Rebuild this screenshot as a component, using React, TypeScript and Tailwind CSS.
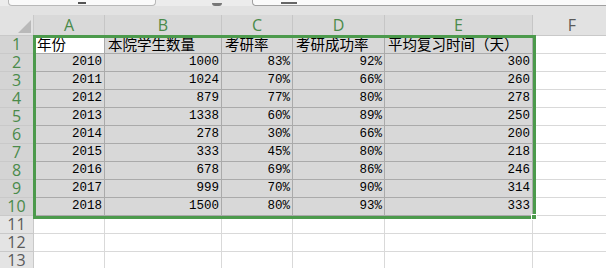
import React from 'react'

const cols = [
  { key: 'A', w: 'w-[71px]' },
  { key: 'B', w: 'w-[117px]' },
  { key: 'C', w: 'w-[71px]' },
  { key: 'D', w: 'w-[92px]' },
  { key: 'E', w: 'w-[148px]' },
]

const header = ['年份', '本院学生数量', '考研率', '考研成功率', '平均复习时间（天）']

const rows = [
  ['2010', '1000', '83%', '92%', '300'],
  ['2011', '1024', '70%', '66%', '260'],
  ['2012', '879', '77%', '80%', '278'],
  ['2013', '1338', '60%', '89%', '250'],
  ['2014', '278', '30%', '66%', '200'],
  ['2015', '333', '45%', '80%', '218'],
  ['2016', '678', '69%', '86%', '246'],
  ['2017', '999', '70%', '90%', '314'],
  ['2018', '1500', '80%', '93%', '333'],
]

const cjk = "font-['Noto_Sans_CJK_SC',sans-serif]"
const mono = "font-['Liberation_Mono',monospace]"
const label = "font-['Open_Sans','Liberation_Sans',sans-serif]"

function RowHead({ n, on }: { n: number; on: boolean }) {
  return (
    <div
      className={`flex w-[34px] shrink-0 items-center justify-center overflow-hidden border-b border-r border-[#c9c9c9] text-[16px] leading-[17px] ${label} ${
        on ? 'bg-[#d4d4d4] text-[#4a8a4a]' : 'bg-[#e4e4e4] text-[#5a5a5a]'
      }`}
    >
      {n}
    </div>
  )
}

export default function App() {
  return (
    <div className="relative h-[268px] w-[606px] overflow-hidden bg-white">
      {/* toolbar remnant */}
      <div className="flex h-[6px] items-end bg-[#ececec]">
        <div className="ml-[8px] flex h-[6px] w-[148px] items-end justify-center rounded-b-[4px] border border-t-0 border-[#b8b8b8] bg-[#fafafa]">
          <span className="mb-[1px] h-[2px] w-[8px] bg-[#555]" />
        </div>
        <div className="ml-[56px] h-[3px] w-[10px] rounded-b-full bg-[#777]" />
        <div className="ml-[30px] flex h-[6px] flex-1 items-end rounded-bl-[4px] border-b border-l border-[#a0a0a0] bg-[#fafafa] pl-[28px]">
          <span className="mb-[1px] h-[2px] w-[16px] bg-[#666]" />
        </div>
      </div>
      <div className="h-[9px] bg-[#e2e2e2]" />

      {/* column headers */}
      <div className="flex h-[21px] bg-[#e2e2e2]">
        <div className="relative w-[34px] shrink-0 border-b border-r border-[#c9c9c9]">
          <div className="absolute bottom-[2px] right-[2px] h-0 w-0 border-b-[13px] border-l-[13px] border-b-[#b9b9b9] border-l-transparent" />
        </div>
        {cols.map((c) => (
          <div
            key={c.key}
            className={`${c.w} flex shrink-0 items-center justify-center border-b border-r border-[#c6c6c6] bg-[#d9d9d9] text-[16px] leading-none text-[#4a8a4a] ${label}`}
          >
            {c.key}
          </div>
        ))}
        <div className={`flex w-[78px] shrink-0 items-center justify-center border-b border-[#c9c9c9] text-[16px] leading-none text-[#5a5a5a] ${label}`}>
          F
        </div>
      </div>

      {/* row 1 */}
      <div className="flex h-[18px]">
        <RowHead n={1} on />
        {header.map((h, i) => (
          <div
            key={h}
            className={`${cols[i].w} flex shrink-0 items-center overflow-hidden whitespace-nowrap border-b border-r border-[#aaaaaa] pl-[3px] text-[14.5px] leading-none text-black ${cjk} ${
              i === 0 ? 'bg-white' : 'bg-[#d8d8d8]'
            }`}
          >
            {h}
          </div>
        ))}
        <div className="w-[78px] shrink-0 border-b border-[#d9d9d9]" />
      </div>

      {rows.map((r, ri) => (
        <div key={ri} className="flex h-[18px]">
          <RowHead n={ri + 2} on />
          {r.map((v, i) => (
            <div
              key={i}
              className={`${cols[i].w} flex shrink-0 items-center justify-end border-b border-r border-[#aaaaaa] bg-[#d8d8d8] pr-[2px] text-[12.5px] leading-none text-black ${mono}`}
            >
              {v}
            </div>
          ))}
          <div className="w-[78px] shrink-0 border-b border-[#d9d9d9]" />
        </div>
      ))}

      {[11, 12, 13].map((n) => (
        <div key={n} className="flex h-[18px]">
          <RowHead n={n} on={false} />
          {cols.map((c) => (
            <div key={c.key} className={`${c.w} shrink-0 border-b border-r border-[#d9d9d9]`} />
          ))}
          <div className="w-[78px] shrink-0 border-b border-[#d9d9d9]" />
        </div>
      ))}

      {/* selection frame */}
      <div className="pointer-events-none absolute left-[33px] top-[35px] h-[184px] w-[503px] border-[3px] border-[#4c9a4c]" />
      <div className="pointer-events-none absolute left-[531px] top-[214px] h-[6px] w-[6px] border border-white bg-[#4c9a4c]" />
    </div>
  )
}
